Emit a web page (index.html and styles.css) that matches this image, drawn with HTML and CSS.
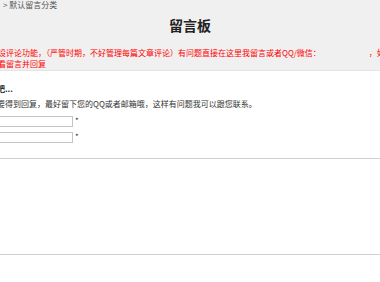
FILE: index.html
```html
<!DOCTYPE html>
<html lang="zh-CN">
<head>
<meta charset="utf-8">
<title>留言板</title>
<link rel="stylesheet" href="styles.css">
</head>
<body>
<div class="page">
  <header class="head">
    <div class="crumb">&gt; 默认留言分类</div>
    <h1 class="title">留言板</h1>
    <div class="notice">
      <div class="line">本站暂未开设评论功能，（严管时期，不好管理每篇文章评论）有问题直接在这里我留言或者QQ/微信：<span class="blank">123456789</span>，如需帮助请留言</div>
      <div class="line">我会及时查看留言并回复</div>
    </div>
  </header>
  <section class="form">
    <div class="heading">说点什么吧...</div>
    <p class="tip">如果您想要得到回复，最好留下您的QQ或者邮箱哦，这样有问题我可以跟您联系。</p>
    <div class="row"><span class="label">昵称：</span><input class="field" type="text"><span class="req">*</span></div>
    <div class="row"><span class="label">邮箱：</span><input class="field" type="text"><span class="req">*</span></div>
    <textarea class="msg"></textarea>
  </section>
</div>
</body>
</html>
```

FILE: styles.css
```css
html, body {
  margin: 0;
  padding: 0;
  background: #fff;
  overflow: hidden;
}
body {
  font-family: "Noto Sans CJK SC", "Noto Sans", sans-serif;
  font-size: 8px;
  color: #333;
}
.page {
  margin: 0 -60px;
}
.head {
  background: #f0f0f0;
  border-bottom: 1px solid #e4e4e4;
  height: 71px;
  box-sizing: border-box;
}
.crumb {
  padding-left: 63px;
  line-height: 10px;
  color: #555;
  white-space: nowrap;
}
.title {
  margin: 5px 0 0;
  text-align: center;
  font-size: 14px;
  line-height: 20px;
  font-weight: bold;
  color: #222;
}
.notice {
  margin-top: 12px;
  padding-left: 18px;
  color: #f00;
  line-height: 11px;
}
.line {
  white-space: nowrap;
}
.blank {
  display: inline-block;
  width: 48px;
  overflow: hidden;
  vertical-align: top;
  color: transparent;
}
.form {
  padding: 0 25px;
}
.heading {
  margin-top: 12px;
  font-weight: bold;
  font-size: 8px;
  line-height: 11px;
  color: #222;
}
.tip {
  margin: 4px 0 0;
  line-height: 11px;
  white-space: nowrap;
}
.row {
  display: flex;
  align-items: flex-start;
  height: 11px;
  margin-top: 5px;
}
.tip + .row {
  margin-top: 7px;
}
.label {
  width: 24px;
  line-height: 11px;
  flex: none;
}
.field {
  width: 84px;
  height: 11px;
  box-sizing: border-box;
  border: 1px solid #c4c4c4;
  padding: 0;
  margin: 0;
  background: #fff;
}
.req {
  margin-left: 2px;
  line-height: 9px;
  color: #333;
}
.msg {
  display: block;
  width: 100%;
  height: 97px;
  box-sizing: border-box;
  margin-top: 15px;
  border: 1px solid #cfcfcf;
  padding: 0;
  resize: none;
}
```
